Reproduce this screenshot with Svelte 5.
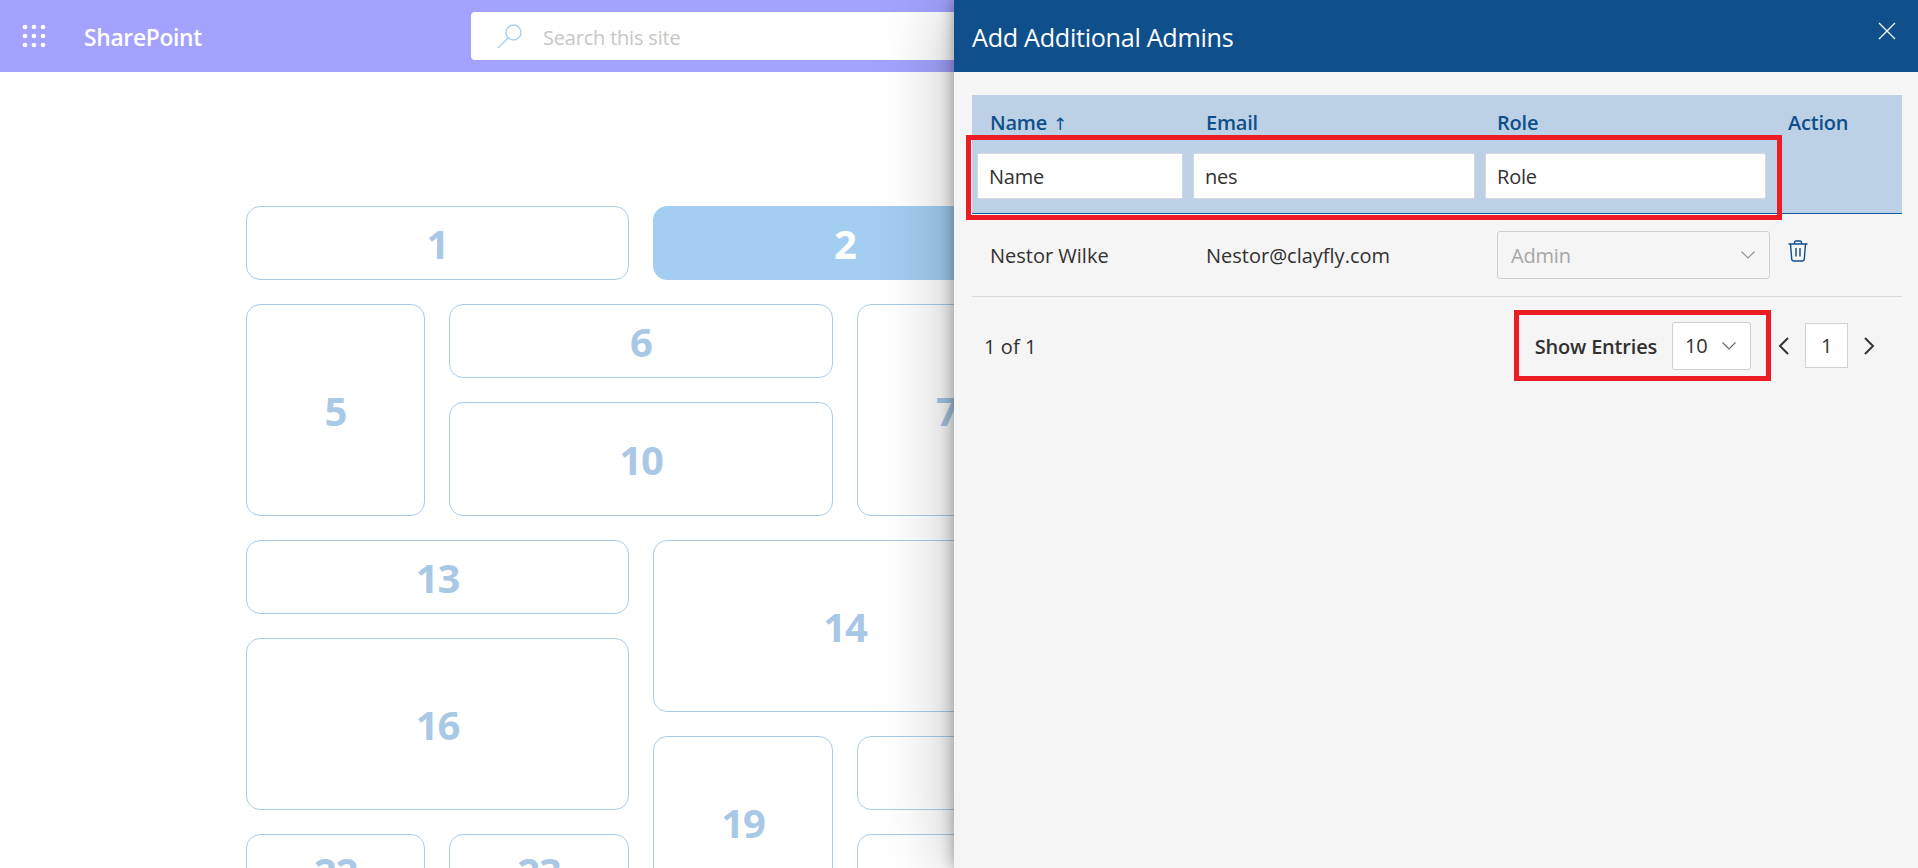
<script>
  const cards = [
    { n: 1, col: 1, cs: 2, row: 1, rs: 1 },
    { n: 2, col: 3, cs: 2, row: 1, rs: 1, active: true },
    { n: 5, col: 1, cs: 1, row: 2, rs: 2 },
    { n: 6, col: 2, cs: 2, row: 2, rs: 1 },
    { n: 7, col: 4, cs: 1, row: 2, rs: 2 },
    { n: 10, col: 2, cs: 2, row: 3, rs: 1 },
    { n: 13, col: 1, cs: 2, row: 4, rs: 1 },
    { n: 14, col: 3, cs: 2, row: 4, rs: 2 },
    { n: 16, col: 1, cs: 2, row: 5, rs: 2 },
    { n: 19, col: 3, cs: 1, row: 6, rs: 2 },
    { n: 20, col: 4, cs: 2, row: 6, rs: 1 },
    { n: 22, col: 1, cs: 1, row: 7, rs: 1 },
    { n: 23, col: 2, cs: 1, row: 7, rs: 1 },
    { n: 24, col: 4, cs: 2, row: 7, rs: 1 }
  ];
  const dots = [0, 1, 2];
</script>

<div class="page">
  <header class="topbar">
    <svg class="waffle" width="24" height="24" viewBox="0 0 24 24">
      {#each dots as y}
        {#each dots as x}
          <circle cx={3 + x * 9} cy={3 + y * 9} r="2.3" fill="#fff" />
        {/each}
      {/each}
    </svg>
    <span class="brand">SharePoint</span>
    <div class="search">
      <svg width="26" height="26" viewBox="0 0 26 26" fill="none" stroke="#a8d0ef" stroke-width="1.4">
        <circle cx="16.5" cy="9.5" r="7.5" />
        <path d="M11 15 L1 25" />
      </svg>
      <span class="placeholder">Search this site</span>
    </div>
  </header>

  <main class="grid">
    {#each cards as c}
      <div
        class="card"
        class:active={c.active}
        style="grid-column: {c.col} / span {c.cs}; grid-row: {c.row} / span {c.rs}"
      >
        {c.n}
      </div>
    {/each}
  </main>

  <aside class="panel">
    <div class="panel-head">
      <h1>Add Additional Admins</h1>
      <svg class="close" width="18" height="18" viewBox="0 0 18 18" stroke="#fff" stroke-width="1.3">
        <path d="M1 1 L17 17 M17 1 L1 17" />
      </svg>
    </div>

    <div class="table">
      <div class="thead">
        <div class="row labels">
          <div>Name <span class="arrow">↑</span></div>
          <div>Email</div>
          <div>Role</div>
          <div>Action</div>
        </div>
        <div class="row filters">
          <div class="field">Name</div>
          <div class="field">nes</div>
          <div class="field">Role</div>
        </div>
      </div>
      <div class="row body-row">
        <div>Nestor Wilke</div>
        <div>Nestor@clayfly.com</div>
        <div class="select-cell">
          <div class="select disabled">
            <span>Admin</span>
            <svg width="14" height="8" viewBox="0 0 14 8" fill="none" stroke="#8f8f8f" stroke-width="1.1">
              <path d="M0.5 0.5 L7 7 L13.5 0.5" />
            </svg>
          </div>
        </div>
        <div class="action">
          <svg width="20" height="22" viewBox="0 0 20 22" fill="none" stroke="#0f4f8b" stroke-width="1.4">
            <path d="M0.5 4 H19.5 M6.5 4 V2.5 Q6.5 1 8 1 H12 Q13.5 1 13.5 2.5 V4" />
            <path d="M2.5 4 L3.7 19 Q3.9 21 6 21 H14 Q16.1 21 16.3 19 L17.5 4" />
            <path d="M8 8 V16.5 M12 8 V16.5" />
          </svg>
        </div>
      </div>
    </div>

    <div class="footer">
      <span class="count">1 of 1</span>
      <div class="pager">
        <span class="entries">Show Entries</span>
        <div class="select small">
          <span>10</span>
          <svg width="14" height="8" viewBox="0 0 14 8" fill="none" stroke="#666" stroke-width="1.1">
            <path d="M0.5 0.5 L7 7 L13.5 0.5" />
          </svg>
        </div>
        <svg class="prev" width="12" height="18" viewBox="0 0 12 18" fill="none" stroke="#333" stroke-width="2">
          <path d="M10 1 L2 9 L10 17" />
        </svg>
        <div class="page-no">1</div>
        <svg class="next" width="12" height="18" viewBox="0 0 12 18" fill="none" stroke="#333" stroke-width="2">
          <path d="M2 1 L10 9 L2 17" />
        </svg>
      </div>
    </div>

    <div class="mark mark-filters"></div>
    <div class="mark mark-entries"></div>
  </aside>
</div>

<style>
  :global(body) {
    margin: 0;
    font-family: "Open Sans", "Noto Sans", sans-serif;
    color: #323130;
  }

  .page {
    position: relative;
    height: 868px;
    overflow: hidden;
    background: #fff;
  }

  .topbar {
    height: 72px;
    background: #a3a3ff;
    display: flex;
    align-items: center;
  }

  .waffle {
    margin-left: 22px;
  }

  .brand {
    margin: 2px 0 0 38px;
    width: 387px;
    color: #fff;
    font-size: 22.8px;
    font-weight: 600;
    letter-spacing: -0.3px;
  }

  .search {
    width: 900px;
    height: 48px;
    background: #fff;
    border-radius: 4px;
    display: flex;
    align-items: center;
    gap: 20px;
    padding-left: 26px;
    color: #c8c6c4;
    font-size: 20px;
    letter-spacing: -0.2px;
  }

  .placeholder {
    margin-top: 2px;
  }

  .grid {
    display: grid;
    grid-template-columns: 179px 180px 180px 180px 180px 180px;
    grid-template-rows: 74px 74px 114px 74px 74px 74px 74px;
    gap: 24px;
    padding: 134px 0 0 246px;
  }

  .card {
    box-sizing: border-box;
    border: 1px solid #a9cbe8;
    border-radius: 14px;
    display: flex;
    align-items: center;
    justify-content: center;
    color: #a9c8e6;
    font-size: 40px;
    font-weight: 700;
    letter-spacing: -1px;
  }

  .card.active {
    background: #a3cef1;
    border-color: #a3cef1;
    color: #fff;
  }

  .panel {
    position: absolute;
    top: 0;
    right: 0;
    bottom: 0;
    width: 964px;
    background: #f5f5f5;
    box-shadow: 0 0 14px rgba(0, 0, 0, 0.35), 0 0 70px rgba(0, 0, 0, 0.28);
  }

  .panel-head {
    height: 72px;
    background: #0f4f8b;
    color: #fff;
    display: flex;
    align-items: center;
    justify-content: space-between;
    padding: 0 22px 0 18px;
  }

  h1 {
    margin: 2px 0 0;
    font-size: 25.2px;
    font-weight: 400;
    letter-spacing: -0.3px;
  }

  .close {
    margin-top: -10px;
  }

  .table {
    margin: 23px 16px 0 18px;
    font-size: 20px;
    letter-spacing: -0.2px;
  }

  .thead {
    background: #bdd1e6;
    border-bottom: 1px solid #0f5aa0;
    height: 118px;
  }

  .row {
    display: grid;
    grid-template-columns: 216px 292px 290px 132px;
    align-items: center;
  }

  .row > div {
    box-sizing: border-box;
  }

  .labels {
    height: 54px;
    margin-bottom: 4px;
    color: #0f4f8b;
    font-weight: 600;
  }

  .labels > div,
  .body-row > div {
    padding-left: 18px;
  }

  .labels > div:nth-child(3) {
    padding-left: 17px;
  }

  .arrow {
    font-family: "DejaVu Sans", sans-serif;
    font-size: 17px;
    font-weight: 400;
    margin-left: 1px;
  }

  .filters > div {
    margin: 0 5px;
  }

  .filters > div:nth-child(3) {
    margin-right: 4px;
  }

  .field {
    height: 46px;
    background: #fff;
    border: 1px solid #d8d8d8;
    box-sizing: border-box;
    border-radius: 2px;
    padding-left: 11px;
    display: flex;
    align-items: center;
  }

  .body-row {
    height: 82px;
    border-bottom: 1px solid #e0d8d8;
    letter-spacing: 0;
  }

  .body-row > .select-cell {
    padding-left: 17px;
  }

  .select {
    box-sizing: border-box;
    height: 48px;
    border: 1px solid #cfcfcf;
    border-radius: 3px;
    display: flex;
    align-items: center;
    justify-content: space-between;
    padding: 0 14px 0 13px;
    letter-spacing: -0.2px;
  }

  .select.disabled {
    color: #a6a6a6;
  }

  .action {
    align-self: start;
    padding-top: 26px;
    line-height: 0;
  }

  .footer {
    height: 97px;
    margin: 0 16px 0 18px;
    display: flex;
    align-items: center;
    justify-content: space-between;
    padding: 0 27px 0 12px;
    font-size: 20px;
    letter-spacing: -0.2px;
  }

  .count {
    margin-top: 2px;
    letter-spacing: 0.1px;
  }

  .pager {
    display: flex;
    align-items: center;
  }

  .entries {
    font-weight: 600;
    margin: 2px 15px 0 0;
  }

  .select.small {
    width: 79px;
    background: #fff;
    padding-left: 12px;
  }

  .prev {
    margin-left: 27px;
  }

  .page-no {
    box-sizing: border-box;
    width: 43px;
    height: 45px;
    margin: 0 15px;
    background: #fff;
    border: 1px solid #d2d2d2;
    display: flex;
    align-items: center;
    justify-content: center;
  }

  .mark {
    position: absolute;
    box-sizing: border-box;
    border: 5px solid #ed1c24;
  }

  .mark-filters {
    left: 12px;
    top: 135px;
    width: 816px;
    height: 85px;
  }

  .mark-entries {
    left: 560px;
    top: 310px;
    width: 257px;
    height: 71px;
  }
</style>
